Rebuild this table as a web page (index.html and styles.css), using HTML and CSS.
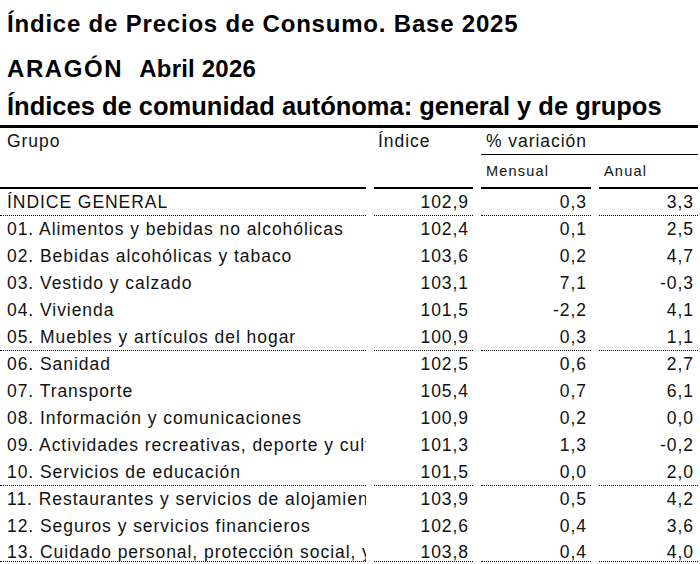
FILE: index.html
```html
<!DOCTYPE html>
<html lang="es">
<head>
<meta charset="utf-8">
<title>IPC Aragón</title>
<link rel="stylesheet" href="styles.css">
</head>
<body>
<div class="page">
  <h1 class="t1">Índice de Precios de Consumo. Base 2025</h1>
  <h2 class="t2"><span class="region">ARAGÓN</span><span class="month">Abril 2026</span></h2>
  <h3 class="t3">Índices de comunidad autónoma: general y de grupos</h3>
  <div class="table">
    <div class="hcell h-grupo">Grupo</div>
    <div class="hcell h-indice">Índice</div>
    <div class="hcell h-var">% variación</div>
    <div class="hcell h-sub h-men">Mensual</div>
    <div class="hcell h-sub h-anu">Anual</div>

    <div class="c name">ÍNDICE GENERAL</div><div class="c num">102,9</div><div class="c num">0,3</div><div class="c num">3,3</div>

    <div class="c name plain">01. Alimentos y bebidas no alcohólicas</div><div class="c num plain">102,4</div><div class="c num plain">0,1</div><div class="c num plain">2,5</div>
    <div class="c name plain">02. Bebidas alcohólicas y tabaco</div><div class="c num plain">103,6</div><div class="c num plain">0,2</div><div class="c num plain">4,7</div>
    <div class="c name plain">03. Vestido y calzado</div><div class="c num plain">103,1</div><div class="c num plain">7,1</div><div class="c num plain">-0,3</div>
    <div class="c name plain">04. Vivienda</div><div class="c num plain">101,5</div><div class="c num plain">-2,2</div><div class="c num plain">4,1</div>
    <div class="c name">05. Muebles y artículos del hogar</div><div class="c num">100,9</div><div class="c num">0,3</div><div class="c num">1,1</div>

    <div class="c name plain">06. Sanidad</div><div class="c num plain">102,5</div><div class="c num plain">0,6</div><div class="c num plain">2,7</div>
    <div class="c name plain">07. Transporte</div><div class="c num plain">105,4</div><div class="c num plain">0,7</div><div class="c num plain">6,1</div>
    <div class="c name plain">08. Información y comunicaciones</div><div class="c num plain">100,9</div><div class="c num plain">0,2</div><div class="c num plain">0,0</div>
    <div class="c name plain">09. Actividades recreativas, deporte y cultura</div><div class="c num plain">101,3</div><div class="c num plain">1,3</div><div class="c num plain">-0,2</div>
    <div class="c name">10. Servicios de educación</div><div class="c num">101,5</div><div class="c num">0,0</div><div class="c num">2,0</div>

    <div class="c name plain">11. Restaurantes y servicios de alojamiento</div><div class="c num plain">103,9</div><div class="c num plain">0,5</div><div class="c num plain">4,2</div>
    <div class="c name plain">12. Seguros y servicios financieros</div><div class="c num plain">102,6</div><div class="c num plain">0,4</div><div class="c num plain">3,6</div>
    <div class="c name last">13. Cuidado personal, protección social, y otros bienes y servicios</div><div class="c num last">103,8</div><div class="c num last">0,4</div><div class="c num last">4,0</div>
  </div>
</div>
</body>
</html>
```

FILE: styles.css
```css
* { box-sizing: border-box; }

html, body {
  margin: 0;
  padding: 0;
  background: #ffffff;
}

body {
  font-family: "Liberation Sans", Arial, sans-serif;
  color: #111;
  overflow: hidden;
}

.page {
  width: 700px;
  height: 564px;
  overflow: hidden;
}

.t1, .t2, .t3 {
  margin: 0;
  padding-left: 7px;
  font-weight: bold;
  color: #000;
  white-space: nowrap;
}

.t1 {
  margin-top: 9px;
  font-size: 24px;
  line-height: 30px;
  letter-spacing: 0.8px;
}

.t2 {
  margin-top: 15px;
  font-size: 24px;
  line-height: 30px;
}

.region {
  letter-spacing: 1.6px;
}

.month {
  margin-left: 16px;
  letter-spacing: 0.2px;
}

.t3 {
  margin-top: 7px;
  font-size: 25.5px;
  line-height: 30px;
}

.table {
  margin-top: 4px;
  width: 698px;
  border-top: 3px solid #000;
  display: grid;
  grid-template-columns: 366px 99px 110px 99px;
  column-gap: 8px;
  font-size: 17.5px;
  letter-spacing: 0.95px;
}

.hcell {
  line-height: 26px;
  white-space: nowrap;
}

.h-grupo {
  grid-column: 1;
  grid-row: 1 / 3;
  padding-left: 7px;
  border-bottom: 2px solid #000;
}

.h-indice {
  grid-column: 2;
  grid-row: 1 / 3;
  padding-left: 4px;
  border-bottom: 2px solid #000;
}

.h-var {
  grid-column: 3 / 5;
  grid-row: 1;
  padding-left: 5px;
  height: 27px;
  border-bottom: 1px solid #000;
}

.h-sub {
  grid-row: 2;
  height: 34px;
  padding-top: 6px;
  padding-left: 5px;
  font-size: 14.5px;
  line-height: 20px;
  letter-spacing: 1.2px;
  border-bottom: 2px solid #000;
}

.h-men { grid-column: 3; }
.h-anu { grid-column: 4; }

.c {
  height: 27px;
  line-height: 26px;
  white-space: nowrap;
  overflow: hidden;
  border-bottom: 1px dotted #000;
}

.c.plain {
  border-bottom: 1px solid transparent;
}

.c.last {
  height: 22px;
  line-height: 25px;
}

.name {
  padding-left: 7px;
}

.num {
  text-align: right;
  padding-right: 4px;
}
```
